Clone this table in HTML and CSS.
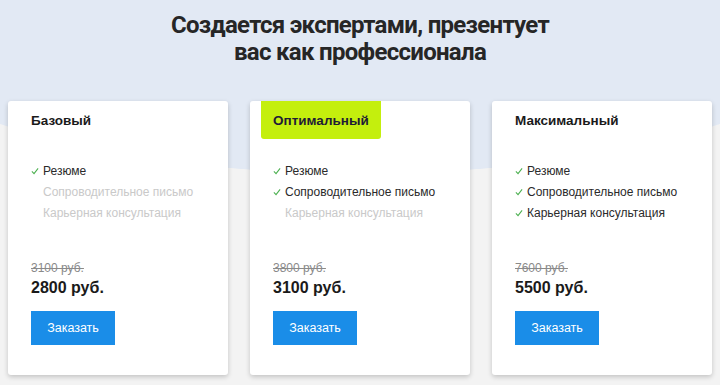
FILE: index.html
```html
<!DOCTYPE html>
<html lang="ru">
<head>
  <meta charset="UTF-8" />
  <title>Тарифы</title>
  <link rel="stylesheet" href="styles.css">
</head>
<body>

  <section class="tarifs">
    <h1>Создается экспертами, презентует<br>вас как профессионала</h1>

    <div class="cards">

      <div class="card">
        <div class="card-head"><span class="card-title">Базовый</span></div>
        <ul class="features">
          <li class="on"><svg class="check" viewBox="0 0 9 8"><polyline points="1,4.5 3.4,7 8,1"/></svg>Резюме</li>
          <li>Сопроводительное письмо</li>
          <li>Карьерная консультация</li>
        </ul>
        <div class="old-price">3100 руб.</div>
        <div class="price">2800 руб.</div>
        <a class="btn" href="#">Заказать</a>
      </div>

      <div class="card">
        <div class="card-head"><span class="card-title badge">Оптимальный</span></div>
        <ul class="features">
          <li class="on"><svg class="check" viewBox="0 0 9 8"><polyline points="1,4.5 3.4,7 8,1"/></svg>Резюме</li>
          <li class="on"><svg class="check" viewBox="0 0 9 8"><polyline points="1,4.5 3.4,7 8,1"/></svg>Сопроводительное письмо</li>
          <li>Карьерная консультация</li>
        </ul>
        <div class="old-price">3800 руб.</div>
        <div class="price">3100 руб.</div>
        <a class="btn" href="#">Заказать</a>
      </div>

      <div class="card">
        <div class="card-head"><span class="card-title">Максимальный</span></div>
        <ul class="features">
          <li class="on"><svg class="check" viewBox="0 0 9 8"><polyline points="1,4.5 3.4,7 8,1"/></svg>Резюме</li>
          <li class="on"><svg class="check" viewBox="0 0 9 8"><polyline points="1,4.5 3.4,7 8,1"/></svg>Сопроводительное письмо</li>
          <li class="on"><svg class="check" viewBox="0 0 9 8"><polyline points="1,4.5 3.4,7 8,1"/></svg>Карьерная консультация</li>
        </ul>
        <div class="old-price">7600 руб.</div>
        <div class="price">5500 руб.</div>
        <a class="btn" href="#">Заказать</a>
      </div>

    </div>
  </section>

</body>
</html>
```

FILE: styles.css
```css
body {
  margin: 0;
  font-family: 'Liberation Sans', Arial, sans-serif;
  background-color: #f3f3f3;
  color: #1a1a1a;
}

.tarifs {
  height: 385px;
  padding-top: 12px;
  box-sizing: border-box;
  background: radial-gradient(ellipse 515px 174px at 50% 0, #e2e9f4 99.6%, #f3f3f3 100%);
}

h1 {
  margin: 0;
  font-family: Roboto, 'Liberation Sans', sans-serif;
  font-size: 24px;
  font-weight: 700;
  line-height: 27px;
  letter-spacing: -0.7px;
  color: #262626;
  text-align: center;
}

.cards {
  display: flex;
  justify-content: center;
  gap: 22px;
  margin-top: 35px;
}

.card {
  width: 220px;
  height: 274px;
  box-sizing: border-box;
  padding: 0 23px;
  background-color: white;
  border-radius: 3px;
  box-shadow: 0 2px 5px rgba(0, 0, 0, 0.2);
}

.card-head {
  height: 38px;
  display: flex;
  align-items: center;
}

.card-title {
  font-size: 13.5px;
  font-weight: 700;
  color: #1a1a1a;
}

.badge {
  height: 38px;
  display: flex;
  align-items: center;
  margin-left: -12px;
  padding: 0 12px;
  background-color: #c4ef0d;
  border-radius: 0 0 3px 3px;
  color: #1f1c36;
}

.features {
  list-style: none;
  margin: 21px 0 0;
  padding: 0;
}

.features li {
  display: flex;
  align-items: center;
  height: 21px;
  padding-left: 12px;
  font-size: 12px;
  white-space: nowrap;
  color: #c9c9c9;
}

.features li.on {
  padding-left: 0;
  color: #2a2a2a;
}

.check {
  width: 8px;
  height: 8px;
  margin-right: 4px;
  fill: none;
  stroke: #4cb050;
  stroke-width: 1.2;
}

.old-price {
  margin-top: 36px;
  font-size: 12px;
  line-height: 18px;
  color: #8a8a8a;
  text-decoration: line-through;
}

.price {
  font-size: 16px;
  font-weight: 700;
  line-height: 22px;
  color: #1a1a1a;
}

.btn {
  display: flex;
  align-items: center;
  justify-content: center;
  width: 84px;
  height: 34px;
  margin-top: 12px;
  background-color: #1a8de8;
  color: white;
  font-size: 12.5px;
  text-decoration: none;
}
```
